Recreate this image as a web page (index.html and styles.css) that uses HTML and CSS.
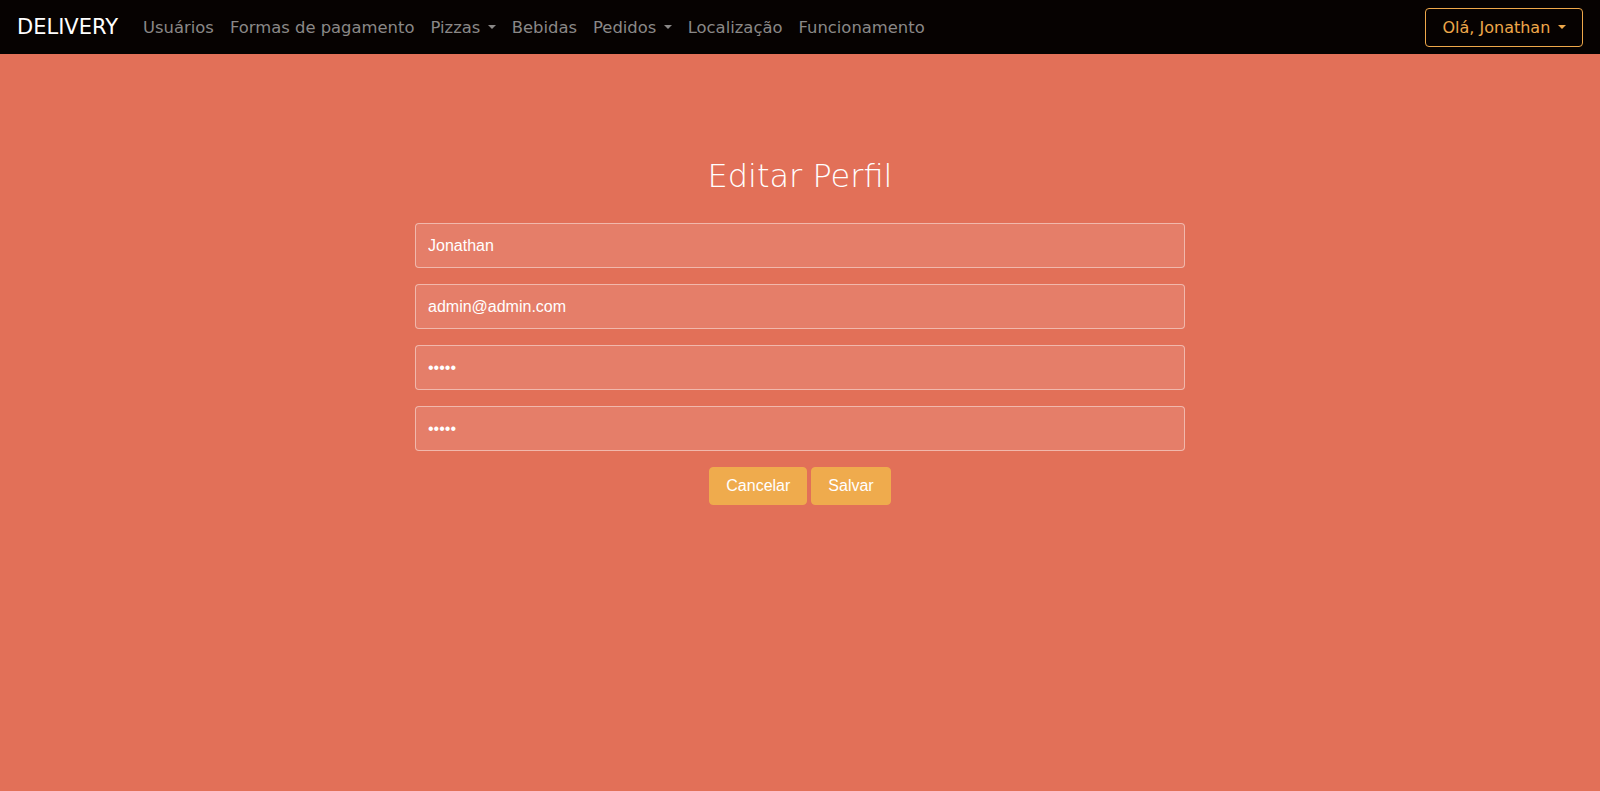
FILE: index.html
```html
<!DOCTYPE html>
<html lang="pt-BR">
<head>
<meta charset="utf-8">
<title>Editar Perfil</title>
<link rel="stylesheet" href="styles.css">
</head>
<body>
<nav class="navbar">
  <a class="brand" href="#">DELIVERY</a>
  <ul class="nav-links">
    <li><a class="nav-link" href="#">Usuários</a></li>
    <li><a class="nav-link" href="#">Formas de pagamento</a></li>
    <li><a class="nav-link dropdown" href="#">Pizzas</a></li>
    <li><a class="nav-link" href="#">Bebidas</a></li>
    <li><a class="nav-link dropdown" href="#">Pedidos</a></li>
    <li><a class="nav-link" href="#">Localização</a></li>
    <li><a class="nav-link" href="#">Funcionamento</a></li>
  </ul>
  <button class="user-btn dropdown" type="button">Olá, Jonathan</button>
</nav>
<main class="main">
  <h2 class="title">Editar Perfil</h2>
  <form class="form">
    <input class="field" type="text" value="Jonathan">
    <input class="field" type="email" value="admin@admin.com">
    <input class="field" type="password" value="12345">
    <input class="field" type="password" value="12345">
    <div class="actions">
      <button class="btn" type="button">Cancelar</button>
      <button class="btn" type="submit">Salvar</button>
    </div>
  </form>
</main>
</body>
</html>
```
FILE: styles.css
```css
html, body {
  margin: 0;
  padding: 0;
}
body {
  background: #e27058;
  min-height: 791px;
  font-family: "DejaVu Sans", "Liberation Sans", sans-serif;
}
.navbar {
  display: flex;
  align-items: center;
  height: 54px;
  padding: 0 16px 0 17px;
  background: #060201;
  box-sizing: border-box;
}
.brand {
  color: #ffffff;
  font-size: 21px;
  text-decoration: none;
  margin-right: 17px;
}
.nav-links {
  display: flex;
  list-style: none;
  margin: 0;
  padding: 0;
  flex: 1;
}
.nav-link {
  display: block;
  padding: 8px 8px;
  color: #8a8887;
  font-size: 16.4px;
  text-decoration: none;
}
.dropdown::after {
  content: "";
  display: inline-block;
  margin-left: 0.45em;
  vertical-align: 0.2em;
  border-top: 0.3em solid;
  border-left: 0.3em solid transparent;
  border-right: 0.3em solid transparent;
}
.user-btn {
  height: 39px;
  width: 158px;
  padding: 0 12px;
  background: transparent;
  border: 1px solid #eea84a;
  border-radius: 4px;
  color: #eea84a;
  font-family: "DejaVu Sans", sans-serif;
  font-size: 16px;
  margin-right: 1px;
}
.main {
  display: flex;
  flex-direction: column;
  align-items: center;
}
.title {
  margin: 103px 0 28px 0;
  font-size: 32px;
  font-weight: 300;
  line-height: 38px;
  color: #ffffff;
}
.form {
  width: 770px;
  display: flex;
  flex-direction: column;
}
.field {
  height: 45px;
  box-sizing: border-box;
  margin: 0 0 16px 0;
  padding: 0 12px;
  background: rgba(255, 255, 255, 0.1);
  border: 1px solid rgba(255, 255, 255, 0.45);
  border-radius: 4px;
  color: #ffffff;
  font-family: "Liberation Sans", Arial, sans-serif;
  font-size: 16px;
  outline: none;
}
.actions {
  display: flex;
  justify-content: center;
  gap: 4px;
}
.btn {
  height: 38px;
  padding: 0 16px;
  background: #efab4d;
  border: 1px solid #efab4d;
  border-radius: 4px;
  color: #ffffff;
  font-family: "Liberation Sans", Arial, sans-serif;
  font-size: 16px;
}
```
